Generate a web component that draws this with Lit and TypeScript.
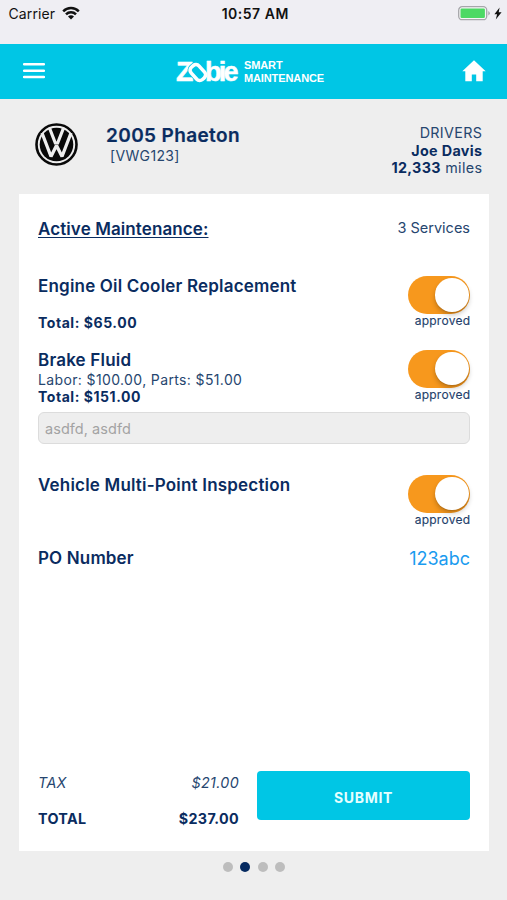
import { LitElement, html, svg, css, nothing } from "lit";
import { customElement, property } from "lit/decorators.js";

interface Service {
  name: string;
  detail?: string;
  total?: string;
  note?: string;
}

const services: Service[] = [
  { name: "Engine Oil Cooler Replacement", detail: "", total: "Total: $65.00" },
  {
    name: "Brake Fluid",
    detail: "Labor: $100.00, Parts: $51.00",
    total: "Total: $151.00",
    note: "asdfd, asdfd",
  },
  { name: "Vehicle Multi-Point Inspection" },
];

@customElement("approve-switch")
class ApproveSwitch extends LitElement {
  @property() label = "approved";
  static styles = css`
    :host { display: flex; flex-direction: column; align-items: flex-end; flex: none; }
    .track {
      box-sizing: border-box; width: 62px; height: 38px; border-radius: 19px;
      background: #f7981d; padding: 2px 1.5px; display: flex; justify-content: flex-end;
    }
    .knob {
      width: 33.5px; height: 33.5px; border-radius: 50%; background: #fff;
      box-shadow: 0 3px 5px rgba(0, 0, 0, 0.22), 0 1px 1px rgba(0, 0, 0, 0.1);
    }
    .label { font-size: 12px; line-height: 14px; letter-spacing: 0.25px; margin-right: -0.25px; color: #1f3f6b; -webkit-text-stroke: 0.15px #1f3f6b; }
  `;
  render() {
    return html`<div class="track"><div class="knob"></div></div>
      <div class="label">${this.label}</div>`;
  }
}

@customElement("service-row")
class ServiceRow extends LitElement {
  @property({ attribute: false }) service!: Service;
  static styles = css`
    :host { display: block; }
    .row { display: flex; justify-content: space-between; height: 61px; }
    .name { font-size: 17px; font-weight: 600; line-height: 21px; height: 21px; letter-spacing: 0.19px; color: #0a2c60; }
    .detail { font-size: 14px; line-height: 18px; height: 18px; letter-spacing: 0.37px; color: #26466f; }
    .total { font-size: 14px; line-height: 16px; font-weight: 700; letter-spacing: 0.55px; color: #0a2c60; }
    .note {
      box-sizing: border-box; height: 32px; margin-top: 1px; padding: 0 6px; border: 1px solid #dcdcdc; border-radius: 6px;
      background: #eee; color: #a3a3a3; font-size: 14.5px; line-height: 31px; letter-spacing: 0.05px;
    }
  `;
  render() {
    const s = this.service;
    return html`
      <div class="row">
        <div>
          <div class="name">${s.name}</div>
          <div class="detail">${s.detail ?? ""}</div>
          <div class="total">${s.total ?? ""}</div>
        </div>
        <approve-switch></approve-switch>
      </div>
      ${s.note ? html`<div class="note">${s.note}</div>` : nothing}
    `;
  }
}

const wifi = svg`
  <path d="M1.2 6.300a11 11 0 0 1 15.600 0" />
  <path d="M4 9.300a7 7 0 0 1 10 0" />
  <path d="M9 14.600 6 11.500a4.200 4.200 0 0 1 6 0z" fill="currentColor" stroke="none" />
`;

@customElement("app-root")
class AppRoot extends LitElement {
  static styles = css`
    :host {
      display: flex; flex-direction: column; width: 507px; height: 900px; overflow: hidden;
      background: #eee; color: #0a2c60; font-family: Inter, "Liberation Sans", sans-serif;
    }
    svg { display: block; flex: none; }
    .status {
      height: 44px; flex: none; background: #efeef3; color: #111; font-size: 14px;
      display: grid; grid-template-columns: 1fr auto 1fr; align-items: start; box-sizing: border-box;
      padding: 5px 5px 0 8.5px; line-height: 18px;
    }
    .carrier { display: flex; gap: 7px; letter-spacing: 0.1px; }
    .clock { font-weight: 600; letter-spacing: 0.5px; }
    .power { display: flex; justify-content: flex-end; gap: 4px; }
    .nav {
      height: 55px; flex: none; box-sizing: border-box; background: #00c6e5; color: #fff;
      display: flex; align-items: center; justify-content: space-between; padding: 0 21px 2px 23px;
    }
    .brand { display: flex; align-items: center; gap: 2px; margin-right: 11px; }
    .tag { font: 700 11px/12.5px "Liberation Sans", sans-serif; letter-spacing: -0.1px; margin-top: 2px; }
    .logo text { font-family: "Liberation Sans", sans-serif; font-weight: 700; fill: #fff; stroke: #fff; stroke-width: 0.5px; }
    .vehicle { height: 95px; flex: none; display: flex; padding: 0 25px 0 35px; box-sizing: border-box; }
    .emblem { margin-top: 24px; }
    .title { margin: 25px 0 0 28px; flex: 1; }
    .model { font-size: 19px; font-weight: 600; line-height: 23px; letter-spacing: 0.38px; -webkit-text-stroke: 0.2px; }
    .plate { font-size: 14px; line-height: 18px; margin-left: 4px; letter-spacing: 0.35px; color: #26466f; }
    .driver { margin-top: 25px; text-align: right; font-size: 14.3px; line-height: 17.5px; letter-spacing: 0.35px; margin-right: -0.3px; color: #26466f; }
    b { font-weight: 700; color: #0a2c60; }
    .card {
      width: 470px; height: 657px; margin-left: 19px; background: #fff; flex: none; box-sizing: border-box;
      padding: 24px 19px 31px 19px; display: flex; flex-direction: column;
    }
    .head { display: flex; justify-content: space-between; height: 58px; flex: none; }
    .active { font-size: 17px; line-height: 22px; font-weight: 600; letter-spacing: 0.1px; text-decoration: underline; text-decoration-thickness: 1.3px; text-underline-offset: 2px; text-decoration-skip-ink: none; }
    .count { font-size: 14.5px; line-height: 19px; color: #26466f; }
    .services { display: flex; flex-direction: column; }
    .s0 { height: 73.5px; }
    .s1 { height: 125px; }
    .s2 { height: 72.5px; }
    .po { display: flex; justify-content: space-between; line-height: 23px; font-size: 17px; font-weight: 600; letter-spacing: 0.15px; }
    .value { color: #1a9bef; font-size: 18px; font-weight: 400; letter-spacing: 0; }
    .footer { margin-top: auto; display: flex; justify-content: space-between; height: 49px; }
    .sums { width: 201px; font-size: 14.3px; letter-spacing: 0.35px; }
    .line { display: flex; justify-content: space-between; line-height: 18px; }
    .tax { font-style: italic; color: #26466f; margin: 3px 0 17.5px; }
    .sum { font-weight: 700; }
    .submit {
      width: 213px; height: 49px; border: 0; border-radius: 4px; background: #00c6e5; color: #e6ffff;
      font: 700 14px Inter, sans-serif; letter-spacing: 0.7px; padding: 4px 0 0;
    }
    .dots { display: flex; justify-content: center; gap: 7.2px; padding: 11px 0 0 1px; }
    .dot { width: 10px; height: 10px; border-radius: 50%; background: #bdbdbd; }
    .dot.on { background: #052a60; }
  `;

  render() {
    return html`
      <div class="status">
        <div class="carrier">
          <span>Carrier</span>
          <svg width="18" height="18" viewBox="0 0 18 18" fill="none" stroke="currentColor" stroke-width="2.5">${wifi}</svg>
        </div>
        <div class="clock">10:57 AM</div>
        <div class="power">
          <svg width="32" height="18" viewBox="0 0 32 18">
            <rect x=".7" y="1.7" width="28" height="13" rx="3.5" fill="#f6f6f6" stroke="#a6a6aa" stroke-width="1.3" />
            <rect x="2.5" y="3.5" width="24.4" height="9.4" rx="1.2" fill="#4cd964" />
            <path d="M30.3 6v4.5q1.5-.6 1.5-2.200T30.3 6z" fill="#a6a6aa" />
          </svg>
          <svg width="8" height="18" viewBox="0 0 8 18"><path d="M5.600 2.500 .4 9.300h2.700L1.800 14.500l5.800-7.200H4.700z" fill="#111" /></svg>
        </div>
      </div>

      <div class="nav">
        <svg width="22" height="17" viewBox="0 0 22 17" stroke="#fff" stroke-width="2.4" stroke-linecap="round">
          <path d="M1 2.200h20M1 8.700h20M1 15h20" />
        </svg>
        <div class="brand">
          <svg class="logo" width="70" height="34" viewBox="0 0 70 34">
            <text x="4" y="27" font-size="28.500">Z</text>
            <g transform="rotate(-42 25.500 18.500)" fill="none">
              <rect x="20.500" y="10.500" width="10.500" height="16.500" rx="4" stroke="#00c6e5" stroke-width="5" />
              <rect x="20.500" y="10.500" width="10.500" height="16.500" rx="4" stroke="#fff" stroke-width="3.600" />
            </g>
            <text x="33" y="27" font-size="27" letter-spacing="-2.800">bie</text>
          </svg>
          <div class="tag">SMART<br />MAINTENANCE</div>
        </div>
        <svg width="24" height="22" viewBox="0 0 24 22"><path d="M12 .3.300 11.300h3V21.300h6.500v-6.800h4.400v6.800h6.500v-10h3z" fill="#fff" /></svg>
      </div>

      <div class="vehicle">
        <svg class="emblem" width="43" height="43" viewBox="0 0 43 43" fill="none">
          <circle cx="21.500" cy="21.500" r="20" stroke="#090909" stroke-width="2.600" />
          <circle cx="21.500" cy="21.500" r="16.800" fill="#090909" />
          <path d="M7 10 16 33.500 21.500 22.500 27 33.500 36 10" stroke="#eee" stroke-width="3.300" stroke-linejoin="bevel" />
          <path d="M14.300 4.500 20.300 20H22.700L28.700 4.500" stroke="#eee" stroke-width="3.200" />
        </svg>
        <div class="title">
          <div class="model">2005 Phaeton</div>
          <div class="plate">[VWG123]</div>
        </div>
        <div class="driver">DRIVERS<br /><b>Joe Davis</b><br /><b>12,333</b> miles</div>
      </div>

      <div class="card">
        <div class="head">
          <div class="active">Active Maintenance:</div>
          <div class="count">3 Services</div>
        </div>
        <div class="services">
          ${services.map((s, i) => html`<service-row class="s${i}" .service=${s}></service-row>`)}
        </div>
        <div class="po"><span>PO Number</span><span class="value">123abc</span></div>
        <div class="footer">
          <div class="sums">
            <div class="line tax"><span>TAX</span><span>$21.00</span></div>
            <div class="line sum"><span>TOTAL</span><span>$237.00</span></div>
          </div>
          <button class="submit">SUBMIT</button>
        </div>
      </div>

      <div class="dots">
        ${[0, 1, 2, 3].map((i) => html`<div class="dot ${i === 1 ? "on" : ""}"></div>`)}
      </div>
    `;
  }
}
